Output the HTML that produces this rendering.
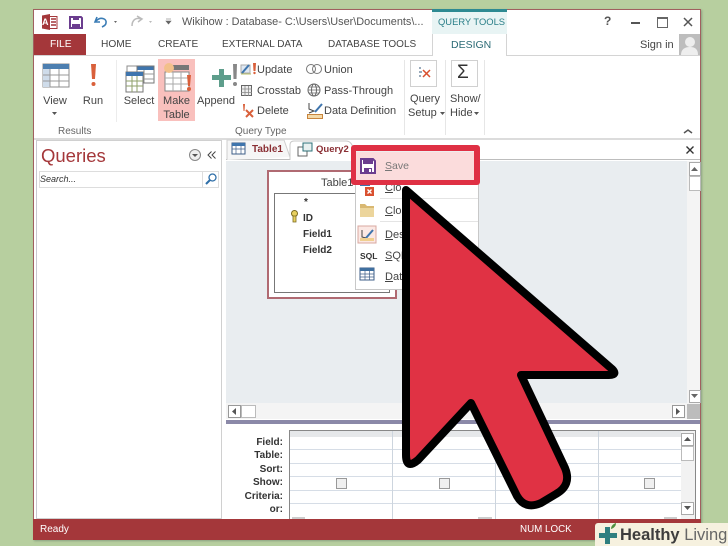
<!DOCTYPE html>
<html><head><meta charset="utf-8">
<style>
html,body{margin:0;padding:0}
body{width:728px;height:546px;overflow:hidden;background:#b7cf9f;position:relative;font-family:"Liberation Sans",sans-serif;color:#444}
.a{position:absolute}
.t{position:absolute;white-space:nowrap;font-size:11px;line-height:14px;color:#444}
.c{text-align:center}
.b{font-weight:bold;color:#333;font-size:10px}
.r{text-align:right;font-weight:bold;font-size:10px;color:#333;width:60px;left:223px}
u{text-decoration:underline}
</style></head><body>
<div id="w" style="position:absolute;left:0;top:0;width:728px;height:546px;filter:blur(.35px)">
<div class="a" style="left:33px;top:9px;width:668px;height:531px;background:#fff;border:1px solid #a0605f;box-sizing:border-box;box-shadow:1px 1px 2px #8aa080"></div>

<!-- title bar -->
<svg class="a" style="left:40px;top:13px" width="120" height="18" viewBox="0 0 120 18">
<rect x="8" y="3.500" width="9" height="12" fill="#fff" stroke="#a4373a"/><path d="M2 2.500L10 1V17L2 15.500Z" fill="#a4373a"/><path d="M11 6h5M11 9h5M11 12h5" stroke="#a4373a" stroke-width="1.500"/>
<path d="M30 4h11l1 1v10H30Z" fill="none" stroke="#6b3d8f" stroke-width="2"/><rect x="32" y="11" width="8" height="4" fill="#6b3d8f"/><rect x="33" y="4" width="6" height="3" fill="#6b3d8f"/>
<path d="M57 4L55 9L60 9" fill="none" stroke="#3a7cb5" stroke-width="1.600"/><path d="M56 8C61 3 67 6 66 10C66 12 64 13 62 14" fill="none" stroke="#3a7cb5" stroke-width="1.600"/>
<path d="M74 8l3 0-1.500 2z" fill="#666"/>
<path d="M101 6C96 4 92 7 92 13M97 3l5 3-4 3" fill="none" stroke="#bbb" stroke-width="1.500"/>
<path d="M109 8l3 0-1.500 2z" fill="#bbb"/>
</svg>
<div class="t" style="left:42px;top:15px;font-size:9px;font-weight:bold;color:#fff;line-height:14px">A</div>
<svg class="a" style="left:165px;top:18px" width="8" height="8"><path d="M1 1h5M1 3l2.500 3L6 3z" fill="#666" stroke="#666" stroke-width=".6"/></svg>
<div class="t" style="left:182px;top:15px;font-size:10.900px;color:#555">Wikihow : Database- C:\Users\User\Documents\...</div>
<div class="a" style="left:432px;top:9px;width:75px;height:25px;background:#e8f4f4;border-top:3px solid #2d8a92;box-sizing:border-box"></div>
<div class="t" style="left:438px;top:15px;font-size:9.400px;color:#2a7f88">QUERY TOOLS</div>
<div class="t" style="left:604px;top:14px;font-weight:bold;font-size:12px;color:#555">?</div>
<div class="a" style="left:631px;top:22px;width:9px;height:2px;background:#555"></div>
<div class="a" style="left:657px;top:17px;width:9px;height:8px;border:1px solid #666;border-top:2px solid #666;box-sizing:content-box"></div>
<svg class="a" style="left:682px;top:16px" width="12" height="12"><path d="M2 2l8 8M10 2l-8 8" stroke="#555" stroke-width="1.500"/></svg>

<!-- tab row -->
<div class="a" style="left:34px;top:34px;width:52px;height:22px;background:#a4373a"></div>
<div class="t" style="left:50px;top:38px;color:#fff;font-size:10.200px">FILE</div>
<div class="t" style="left:101px;top:38px;font-size:10.200px">HOME</div>
<div class="t" style="left:158px;top:38px;font-size:10.100px">CREATE</div>
<div class="t" style="left:222px;top:38px;font-size:10px">EXTERNAL DATA</div>
<div class="t" style="left:328px;top:38px;font-size:10px">DATABASE TOOLS</div>
<div class="a" style="left:34px;top:55px;width:398px;height:1px;background:#d4d4d4"></div>
<div class="a" style="left:507px;top:55px;width:193px;height:1px;background:#d4d4d4"></div>
<div class="a" style="left:432px;top:34px;width:75px;height:22px;background:#fff;border-left:1px solid #d4d4d4;border-right:1px solid #d4d4d4;box-sizing:border-box"></div>
<div class="t" style="left:451px;top:38px;font-size:10.500px;color:#2a6a75">DESIGN</div>
<div class="t" style="left:640px;top:38px;font-size:11px">Sign in</div>
<svg class="a" style="left:679px;top:34px" width="21" height="21"><rect width="21" height="21" fill="#bdbdbd"/><circle cx="11" cy="8" r="5" fill="#eee"/><path d="M2 21c0-6 4-8 9-8s8 2 8 8z" fill="#eee"/></svg>

<!-- ribbon icons -->
<svg class="a" style="left:34px;top:56px" width="400" height="70" viewBox="0 0 400 70">
<!-- View -->
<rect x="9" y="8" width="26" height="23" fill="#fff" stroke="#8c8c8c"/><rect x="9" y="8" width="26" height="5" fill="#4d7fb0"/><rect x="9" y="13" width="7" height="18" fill="#cfdcea"/><path d="M9 19h26M9 25h26M16 13v18M25 13v18" stroke="#999"/>
<!-- Run -->
<path d="M57 8h5l-1 15h-3z" fill="#d9603b"/><circle cx="59.500" cy="28" r="2" fill="#d9603b"/>
<!-- Select -->
<rect x="93" y="10" width="17" height="17" fill="#fff" stroke="#8c8c8c"/><rect x="103" y="10" width="17" height="4" fill="#3f75ad"/><rect x="103" y="10" width="17" height="17" fill="none" stroke="#777"/><path d="M110 18h10M110 23h10" stroke="#999"/>
<rect x="92" y="16" width="17" height="20" fill="#fff" stroke="#777"/><rect x="92" y="16" width="17" height="4" fill="#3f75ad"/><path d="M92 25h17M92 30h17M98 20v16M103 20v16" stroke="#8fa06a"/>
<!-- Make Table -->
<rect x="124" y="3" width="37" height="62" fill="#f9c0bd"/>
<rect x="131" y="9" width="24" height="5" fill="#777"/><rect x="131" y="16" width="24" height="19" fill="#fff" stroke="#888"/><path d="M131 22h24M131 28h24M139 16v19M147 16v19" stroke="#aaa"/>
<circle cx="135" cy="12" r="5" fill="#f2c08a"/><path d="M153 19h4l-1 11h-2z" fill="#d9603b"/><circle cx="155" cy="33" r="2" fill="#d9603b"/>
<!-- Append -->
<path d="M178 19h7v-6h5v6h7v5h-7v7h-5v-7h-7z" fill="#5e9e8c"/><path d="M189 8h4l-.5 15h-3z" transform="translate(10 0)" fill="#888"/><circle cx="201" cy="28" r="2" fill="#888"/>
<!-- Update -->
<rect x="207" y="9" width="9" height="8" fill="#dfe8f2" stroke="#aaa"/><path d="M208 17l7-8" stroke="#3f75ad" stroke-width="2"/><path d="M207 18h10" stroke="#b8c06a"/><path d="M219 7h3l-.5 8h-2z" fill="#d9603b"/><circle cx="220.500" cy="17" r="1.200" fill="#d9603b"/>
<!-- Crosstab -->
<rect x="207.500" y="29.500" width="10" height="10" fill="#eee" stroke="#666"/><path d="M207 33h11M207 36.500h11M211 30v10M214.500 30v10" stroke="#888" stroke-width=".8"/>
<!-- Delete -->
<path d="M209 48h2l-.5 7h-1z" fill="#d9603b"/><path d="M212 54l7 7M219 54l-7 7" stroke="#d9603b" stroke-width="2"/>
<!-- Union -->
<circle cx="277" cy="13" r="4.500" fill="none" stroke="#777"/><circle cx="283" cy="13" r="4.500" fill="none" stroke="#777"/>
<!-- Pass-through -->
<circle cx="280" cy="34" r="6" fill="none" stroke="#666"/><ellipse cx="280" cy="34" rx="2.500" ry="6" fill="none" stroke="#666"/><path d="M274 34h12M275 31h10M275 37h10" stroke="#666" stroke-width=".7"/>
<!-- Data def -->
<path d="M275 47v6l5 2-5 2" fill="none" stroke="#444"/><path d="M281 56l7-8" stroke="#3f75ad" stroke-width="2"/><rect x="273.500" y="58.500" width="15" height="4" fill="#f4d9a8" stroke="#c8843c"/>
<!-- dividers -->
<path d="M82.500 4v62" stroke="#ececec"/>
</svg>
<div class="t c" style="left:39px;top:94px;width:32px">View</div>
<div class="t c" style="left:77px;top:94px;width:32px">Run</div>
<div class="t c" style="left:120px;top:94px;width:38px">Select</div>
<div class="t c" style="left:158px;top:94px;width:37px">Make</div>
<div class="t c" style="left:158px;top:108px;width:37px">Table</div>
<div class="t c" style="left:195px;top:94px;width:42px">Append</div>
<svg class="a" style="left:52px;top:112px" width="6" height="4"><path d="M0 0h5l-2.500 3z" fill="#555"/></svg>
<div class="t" style="left:58px;top:125px;font-size:10px;color:#666">Results</div>
<div class="t" style="left:235px;top:125px;font-size:10px;color:#666">Query Type</div>
<div class="t" style="left:257px;top:63px">Update</div>
<div class="t" style="left:257px;top:84px">Crosstab</div>
<div class="t" style="left:257px;top:104px">Delete</div>
<div class="t" style="left:324px;top:63px">Union</div>
<div class="t" style="left:324px;top:84px">Pass-Through</div>
<div class="t" style="left:324px;top:104px">Data Definition</div>

<div class="a" style="left:404px;top:60px;width:1px;height:75px;background:#e6e6e6"></div>
<div class="a" style="left:445px;top:60px;width:1px;height:75px;background:#e6e6e6"></div>
<div class="a" style="left:484px;top:60px;width:1px;height:75px;background:#e6e6e6"></div>
<div class="a" style="left:410px;top:60px;width:27px;height:27px;border:1px solid #d0d0d0;box-sizing:border-box"></div>
<svg class="a" style="left:418px;top:66px" width="14" height="14"><path d="M5 4l7 7M12 4l-7 7" stroke="#d9502f" stroke-width="1.500"/><path d="M1 2h2M1 6h3M1 10h2" stroke="#9ab" stroke-width="2"/></svg>
<div class="a" style="left:451px;top:60px;width:27px;height:27px;border:1px solid #d0d0d0;box-sizing:border-box"></div>
<div class="t" style="left:457px;top:62px;font-size:19px;line-height:22px;color:#333">Σ</div>
<div class="t c" style="left:406px;top:92px;width:38px">Query</div>
<div class="t" style="left:408px;top:106px">Setup</div>
<svg class="a" style="left:440px;top:112px" width="6" height="4"><path d="M0 0h5l-2.500 3z" fill="#555"/></svg>
<div class="t" style="left:450px;top:92px">Show/</div>
<div class="t" style="left:450px;top:106px">Hide</div>
<svg class="a" style="left:474px;top:112px" width="6" height="4"><path d="M0 0h5l-2.500 3z" fill="#555"/></svg>
<svg class="a" style="left:683px;top:128px" width="10" height="7"><path d="M1 5l4-3 4 3" fill="none" stroke="#555" stroke-width="1.500"/></svg>
<div class="a" style="left:34px;top:138px;width:666px;height:2px;background:#dcdcdc"></div>

<!-- left pane -->
<div class="a" style="left:36px;top:140px;width:186px;height:379px;background:#fff;border:1px solid #d0d0d0;border-left:1px solid #c8c8d0;box-sizing:border-box"></div>
<div class="t" style="left:41px;top:145px;font-size:18.500px;line-height:22px;color:#a4373a">Queries</div>
<svg class="a" style="left:188px;top:148px" width="14" height="14"><circle cx="7" cy="7" r="5.500" fill="#eee" stroke="#888"/><path d="M4 6h6l-3 3z" fill="#555"/></svg>
<svg class="a" style="left:207px;top:150px" width="10" height="10"><path d="M4.500 1.500L1 5l3.500 3.500M8.500 1.500L5 5l3.500 3.500" fill="none" stroke="#444"/></svg>
<div class="a" style="left:39px;top:171px;width:180px;height:17px;border:1px solid #ddd;box-sizing:border-box"></div>
<div class="t" style="left:40px;top:172px;font-size:9px;font-style:italic;color:#333">Search...</div>
<div class="a" style="left:202px;top:171px;width:1px;height:17px;background:#ddd"></div>
<svg class="a" style="left:204px;top:172px" width="14" height="14"><circle cx="8.500" cy="5.500" r="3.500" fill="#fff" stroke="#2f6fa8" stroke-width="1.300"/><path d="M6 8l-4 4" stroke="#2f6fa8" stroke-width="2"/></svg>

<!-- doc tabs -->
<div class="a" style="left:226px;top:140px;width:474px;height:20px;background:#fff;border-bottom:1px solid #bdbdbd;box-sizing:border-box"></div>
<svg class="a" style="left:226px;top:139px" width="130" height="22"><path d="M1 21V1H58l6 17" fill="#f6f6f6" stroke="#cfcfcf"/><path d="M64 21V6q0-4 4-4h52q4 0 6 4l5 15" fill="#fff" stroke="#c8c8c8"/>
<rect x="6" y="4" width="13" height="11" fill="#fff" stroke="#3f5f88"/><rect x="6" y="4" width="13" height="3" fill="#3f75ad"/><path d="M6 10h13M10 7v8M15 7v8" stroke="#3f5f88" stroke-width=".7"/>
<rect x="72" y="8" width="9" height="9" fill="#fff" stroke="#666"/><rect x="77" y="4" width="9" height="8" fill="#e8f0f0" stroke="#2d7078"/></svg>
<div class="t" style="left:252px;top:143px;font-size:10px;font-weight:bold;color:#8a2f34">Table1</div>
<div class="t" style="left:316px;top:143px;font-size:9.500px;font-weight:bold;color:#8a2f34">Query2</div>
<svg class="a" style="left:685px;top:145px" width="10" height="10"><path d="M1.500 1.500l7 7M8.500 1.500l-7 7" stroke="#333" stroke-width="1.400"/></svg>

<!-- query design area -->
<div class="a" style="left:226px;top:161px;width:461px;height:242px;background:#e9edf0"></div>
<div class="a" style="left:687px;top:161px;width:13px;height:258px;background:#f4f4f4"></div>
<div class="a" style="left:226px;top:403px;width:461px;height:16px;background:#f4f4f4"></div>
<div class="a" style="left:689px;top:162px;width:12px;height:14px;background:#fff;border:1px solid #aaa;box-sizing:border-box"></div>
<svg class="a" style="left:691px;top:167px" width="8" height="5"><path d="M0 4h7L3.500 0z" fill="#666"/></svg>
<div class="a" style="left:689px;top:176px;width:12px;height:15px;background:#fff;border:1px solid #bbb;box-sizing:border-box"></div>
<div class="a" style="left:689px;top:390px;width:12px;height:13px;background:#fff;border:1px solid #aaa;box-sizing:border-box"></div>
<svg class="a" style="left:691px;top:394px" width="8" height="5"><path d="M0 0h7L3.500 4z" fill="#666"/></svg>
<div class="a" style="left:687px;top:404px;width:13px;height:15px;background:#bcbcbc"></div>
<div class="a" style="left:228px;top:405px;width:13px;height:13px;background:#fff;border:1px solid #999;box-sizing:border-box"></div>
<svg class="a" style="left:232px;top:408px" width="5" height="8"><path d="M4 0v7L0 3.500z" fill="#555"/></svg>
<div class="a" style="left:241px;top:405px;width:15px;height:13px;background:#fff;border:1px solid #bbb;box-sizing:border-box"></div>
<div class="a" style="left:672px;top:405px;width:13px;height:13px;background:#fff;border:1px solid #999;box-sizing:border-box"></div>
<svg class="a" style="left:676px;top:408px" width="5" height="8"><path d="M0 0v7l4-3.500z" fill="#555"/></svg>
<div class="a" style="left:226px;top:420px;width:474px;height:4px;background:#8b89a8"></div>

<!-- Table1 box -->
<div class="a" style="left:267px;top:170px;width:130px;height:129px;background:#fff;border:2px solid #b06a72;box-sizing:border-box"></div>
<div class="t" style="left:321px;top:176px;font-size:11px">Table1</div>
<div class="a" style="left:274px;top:193px;width:116px;height:100px;border:1px solid #777;box-sizing:border-box"></div>
<div class="t b" style="left:304px;top:196px">*</div>
<div class="t b" style="left:303px;top:212px">ID</div>
<div class="t b" style="left:303px;top:228px">Field1</div>
<div class="t b" style="left:303px;top:244px">Field2</div>
<svg class="a" style="left:290px;top:210px" width="9" height="13"><circle cx="4.500" cy="3.500" r="3" fill="#e8d060" stroke="#7a6a20"/><path d="M3 6h3v6H3z" fill="#e8d060" stroke="#7a6a20" stroke-width=".8"/></svg>

<!-- context menu -->
<div class="a" style="left:355px;top:150px;width:124px;height:140px;background:#fff;border:1px solid #c8c8c8;box-sizing:border-box"></div>
<div class="a" style="left:380px;top:198px;width:98px;height:1px;background:#e4e4e4"></div>
<div class="a" style="left:380px;top:221px;width:98px;height:1px;background:#e4e4e4"></div>
<svg class="a" style="left:357px;top:180px" width="24" height="112">
<rect x="3" y="3" width="10" height="3" fill="#3f75ad"/><rect x="8" y="7" width="9" height="9" fill="#d9502f"/><path d="M10.500 9.500l4 4M14.500 9.500l-4 4" stroke="#fff" stroke-width="1.400"/>
<path d="M3 28v-4h5l2 2h7v2z" fill="#d9b872"/><rect x="3" y="28" width="14" height="9" fill="#ecd59c"/>
<rect x="1" y="46" width="18" height="17" fill="#fbe8e4" stroke="#d8a8a0"/><path d="M5 50v7l4 1-4 2" fill="none" stroke="#444"/><path d="M9 58l7-8" stroke="#3f75ad" stroke-width="2"/><rect x="3" y="58" width="14" height="3" fill="#f0cf90"/>
<rect x="3" y="88" width="14" height="12" fill="#fff" stroke="#3f5f88"/><rect x="3" y="88" width="14" height="3" fill="#3f6f9f"/><path d="M3 94h14M3 97h14M8 91v9M12.500 91v9" stroke="#3f5f88" stroke-width=".7"/>
</svg>
<div class="t" style="left:360px;top:249px;font-size:8.500px;font-weight:bold;color:#333">SQL</div>
<div class="t" style="left:385px;top:181px"><u>C</u>lo</div>
<div class="t" style="left:385px;top:204px"><u>C</u>lo</div>
<div class="t" style="left:385px;top:228px"><u>D</u>es</div>
<div class="t" style="left:385px;top:249px"><u>S</u>QL</div>
<div class="t" style="left:385px;top:270px"><u>D</u>at</div>

<!-- Save highlight -->
<div class="a" style="left:351px;top:145px;width:129px;height:40px;background:#df3044;border-radius:3px"></div>
<div class="a" style="left:356px;top:151px;width:118px;height:29px;background:#fbdcdc;border-top:1px solid #eee;box-sizing:border-box"></div>
<svg class="a" style="left:360px;top:158px" width="16" height="16"><path d="M1 1h12l2 2v12H1Z" fill="#fff" stroke="#6b3d8f" stroke-width="2"/><rect x="3" y="1" width="10" height="5" fill="#6b3d8f"/><rect x="4" y="10" width="8" height="5" fill="#6b3d8f"/><rect x="9" y="11" width="2" height="3" fill="#fff"/></svg>
<div class="t" style="left:385px;top:159px;font-size:10.500px;color:#777"><u>S</u>ave</div>

<!-- lower grid -->
<div class="a" style="left:226px;top:424px;width:474px;height:95px;background:#fff"></div>
<div class="t r" style="top:436px">Field:</div>
<div class="t r" style="top:449px">Table:</div>
<div class="t r" style="top:463px">Sort:</div>
<div class="t r" style="top:476px">Show:</div>
<div class="t r" style="top:490px">Criteria:</div>
<div class="t r" style="top:503px">or:</div>
<div class="a" style="left:289px;top:430px;width:407px;height:89px;border:1px solid #888;border-bottom:none;box-sizing:border-box"></div>
<div class="a" style="left:290px;top:431px;width:391px;height:6px;background:#e6e8ea"></div>
<div class="a" style="left:290px;top:449px;width:391px;height:1px;background:#d6dde6"></div>
<div class="a" style="left:290px;top:463px;width:391px;height:1px;background:#d6dde6"></div>
<div class="a" style="left:290px;top:476px;width:391px;height:1px;background:#d6dde6"></div>
<div class="a" style="left:290px;top:490px;width:391px;height:1px;background:#d6dde6"></div>
<div class="a" style="left:290px;top:503px;width:391px;height:1px;background:#d6dde6"></div>
<div class="a" style="left:392px;top:431px;width:1px;height:88px;background:#cdd5de"></div>
<div class="a" style="left:495px;top:431px;width:1px;height:88px;background:#cdd5de"></div>
<div class="a" style="left:598px;top:431px;width:1px;height:88px;background:#cdd5de"></div>
<div class="a" style="left:336px;top:478px;width:11px;height:11px;background:#f0f0f0;border:1px solid #999;box-sizing:border-box"></div>
<div class="a" style="left:439px;top:478px;width:11px;height:11px;background:#f0f0f0;border:1px solid #999;box-sizing:border-box"></div>
<div class="a" style="left:644px;top:478px;width:11px;height:11px;background:#f0f0f0;border:1px solid #999;box-sizing:border-box"></div>
<div class="a" style="left:681px;top:431px;width:14px;height:88px;background:#f2f2f2"></div>
<div class="a" style="left:681px;top:433px;width:13px;height:13px;background:#fff;border:1px solid #aaa;box-sizing:border-box"></div>
<svg class="a" style="left:684px;top:437px" width="8" height="5"><path d="M0 4h7L3.500 0z" fill="#555"/></svg>
<div class="a" style="left:681px;top:446px;width:13px;height:15px;background:#fff;border:1px solid #bbb;box-sizing:border-box"></div>
<div class="a" style="left:681px;top:502px;width:13px;height:13px;background:#fff;border:1px solid #aaa;box-sizing:border-box"></div>
<svg class="a" style="left:684px;top:506px" width="8" height="5"><path d="M0 0h7L3.500 4z" fill="#555"/></svg>
<div class="a" style="left:292px;top:517px;width:13px;height:2px;background:#ccc"></div>
<div class="a" style="left:478px;top:517px;width:14px;height:2px;background:#ccc"></div>
<div class="a" style="left:664px;top:517px;width:13px;height:2px;background:#ccc"></div>

<!-- status bar -->
<div class="a" style="left:33px;top:519px;width:668px;height:21px;background:#a4373a"></div>
<div class="t" style="left:40px;top:523px;color:#fff;font-size:10px">Ready</div>
<div class="t" style="left:520px;top:523px;color:#fff;font-size:9.800px">NUM LOCK</div>

<!-- big arrow -->
<svg class="a" style="left:0;top:0" width="728" height="546">
<path d="M406 190L612 369Q618 375 609 375L521 375L565 468Q572 485 556 494L541 503Q525 510 517 496L471 403L418 460Q406 470 406 455Z" fill="#e03244" stroke="#000" stroke-width="8" stroke-linejoin="round"/>
</svg>

<!-- watermark -->
<div class="a" style="left:595px;top:523px;width:133px;height:23px;background:#f6f1df;border-radius:3px 0 0 0"></div>
<svg class="a" style="left:597px;top:522px" width="24" height="22"><path d="M8 5h5v6h7v5h-7v6H8v-6H2v-5h6z" fill="#2f7f7f"/><path d="M14 7c0-3 2-5 5-6 0 3-2 5-5 6z" fill="#4f8f3f"/></svg>
<div class="t" style="left:620px;top:525px;font-size:16.500px;line-height:20px;color:#444"><span style="font-weight:bold;color:#3d3d3d">Healthy</span> <span style="color:#666">Living</span></div>
</div>
</body></html>
